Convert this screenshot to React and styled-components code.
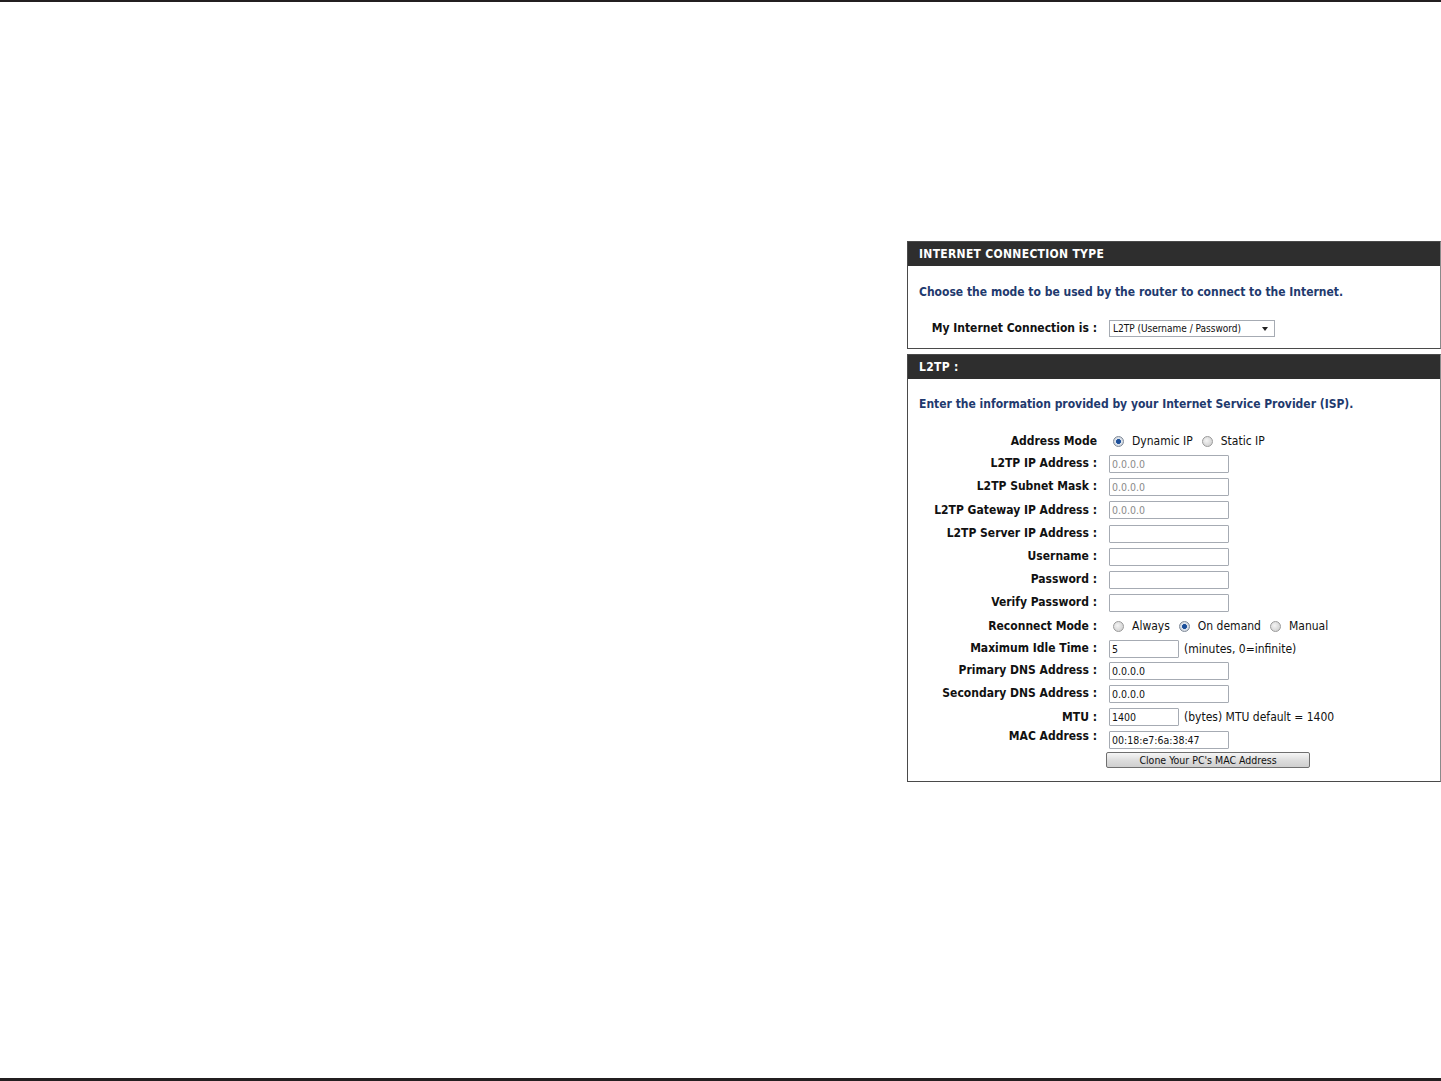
import React from "react";
import styled, { createGlobalStyle } from "styled-components";

const GlobalStyle = createGlobalStyle`
  html, body {
    margin: 0;
    padding: 0;
    background: #fff;
  }
  body {
    font-family: "DejaVu Sans Condensed", "DejaVu Sans", sans-serif;
  }
`;

const Page = styled.div`
  height: 1081px;
  box-sizing: border-box;
  border-top: 2px solid #231f20;
  border-bottom: 3px solid #231f20;
  display: flex;
  justify-content: flex-end;
`;

const Column = styled.div`
  width: 534px;
  margin-top: 239px;
  display: flex;
  flex-direction: column;
  gap: 5px;
`;

const Panel = styled.div`
  border: 1px solid #4a4a4a;
  border-right-color: #8a8a8a;
  background: #fff;
  padding-bottom: ${(p) => p.$pb || 0}px;
`;

const Header = styled.div`
  height: 24px;
  background: #2e2e2e;
  color: #fff;
  font-weight: bold;
  font-size: 12px;
  letter-spacing: 0.3px;
  display: flex;
  align-items: center;
  padding-left: 11px;
`;

const Intro = styled.div`
  color: #1f3a6e;
  font-weight: bold;
  font-size: 12px;
  padding: ${(p) => p.$pt || 18}px 11px 0;
  line-height: 15px;
`;

const Form = styled.div`
  display: grid;
  grid-template-columns: 189px 1fr;
  column-gap: 12px;
  margin-top: ${(p) => p.$mt || 0}px;
`;

const Label = styled.div`
  font-weight: bold;
  font-size: 12px;
  color: #111;
  text-align: right;
  display: flex;
  justify-content: flex-end;
  align-items: ${(p) => (p.$top ? "flex-start" : "center")};
  min-height: ${(p) => p.$h || 23}px;
  line-height: 15px;
  white-space: nowrap;
`;

const Field = styled.div`
  display: flex;
  align-items: center;
  gap: 5px;
  min-height: ${(p) => p.$h || 23}px;
  font-size: 12px;
  color: #111;
`;

const Stack = styled.div`
  display: flex;
  flex-direction: column;
  align-items: flex-start;
  gap: 3px;
  padding-top: 2px;
`;

const Input = styled.input`
  box-sizing: border-box;
  width: ${(p) => p.$w || 120}px;
  height: 18px;
  margin: 0;
  border: 1px solid #a6abb3;
  border-radius: 1px;
  padding: 0 2px;
  font-family: inherit;
  font-size: 10.5px;
  color: #111;
  background: #fff;
  outline: none;
  &:disabled {
    color: #8a8a8a;
    background: #fff;
  }
`;

const SelectWrap = styled.div`
  position: relative;
  width: 166px;
  height: 17px;
  box-sizing: border-box;
  border: 1px solid #a6abb3;
  &::after {
    content: "";
    position: absolute;
    right: 6px;
    top: 6px;
    border-left: 3px solid transparent;
    border-right: 3px solid transparent;
    border-top: 4px solid #222;
  }
`;

const Select = styled.select`
  appearance: none;
  display: block;
  border: none;
  margin: 0;
  background: transparent;
  width: 100%;
  height: 15px;
  line-height: 15px;
  padding: 0 0 0 3px;
  font-family: inherit;
  font-size: 10px;
  color: #111;
  outline: none;
`;

const RadioGroup = styled.label`
  display: inline-flex;
  align-items: center;
  gap: 8px;
  font-size: 12px;
`;

const Radio = styled.input.attrs({ type: "radio" })`
  appearance: none;
  margin: 0 0 0 4px;
  width: 11px;
  height: 11px;
  border-radius: 50%;
  border: 1px solid #9a9a9a;
  background: radial-gradient(circle at 40% 40%, #f4f4f4, #c8c8c8);
  box-sizing: border-box;
  &:checked {
    border-color: #7f8a99;
    background: radial-gradient(circle, #1c4f9a 0 2.2px, #dde6f2 2.6px, #c8c8c8);
  }
`;

const Note = styled.span`
  font-size: 12px;
  color: #111;
`;

const Button = styled.button`
  width: 204px;
  height: 16px;
  margin-left: -3px;
  padding: 0;
  border: 1px solid #6f6f6f;
  border-radius: 2px;
  background: linear-gradient(#f6f6f6, #dcdcdc 55%, #cfcfcf);
  font-family: inherit;
  font-size: 10.5px;
  color: #111;
  line-height: 14px;
`;

const rows = [
  { label: "L2TP IP Address :", value: "0.0.0.0", disabled: true, h: 23 },
  { label: "L2TP Subnet Mask :", value: "0.0.0.0", disabled: true, h: 23 },
  { label: "L2TP Gateway IP Address :", value: "0.0.0.0", disabled: true, h: 24 },
  { label: "L2TP Server IP Address :", value: "", h: 23 },
  { label: "Username :", value: "", h: 23 },
  { label: "Password :", value: "", type: "password", h: 23 },
  { label: "Verify Password :", value: "", type: "password", h: 23 },
];

export default function App() {
  return (
    <>
      <GlobalStyle />
      <Page>
        <Column>
          <Panel $pb={9}>
            <Header>INTERNET CONNECTION TYPE</Header>
            <Intro $pt={19}>Choose the mode to be used by the router to connect to the Internet.</Intro>
            <Form $mt={17}>
              <Label $h={22}>My Internet Connection is :</Label>
              <Field $h={22}>
                <SelectWrap>
                  <Select defaultValue="l2tp">
                    <option value="l2tp">L2TP (Username / Password)</option>
                  </Select>
                </SelectWrap>
              </Field>
            </Form>
          </Panel>

          <Panel $pb={13}>
            <Header>L2TP :</Header>
            <Intro $pt={18}>Enter the information provided by your Internet Service Provider (ISP).</Intro>
            <Form $mt={18}>
              <Label $h={22}>Address Mode</Label>
              <Field $h={22}>
                <RadioGroup>
                  <Radio name="mode" defaultChecked /> Dynamic IP
                </RadioGroup>
                <RadioGroup>
                  <Radio name="mode" /> Static IP
                </RadioGroup>
              </Field>

              {rows.map((r) => (
                <React.Fragment key={r.label}>
                  <Label $h={r.h}>{r.label}</Label>
                  <Field $h={r.h}>
                    <Input
                      type={r.type || "text"}
                      defaultValue={r.value}
                      disabled={r.disabled}
                    />
                  </Field>
                </React.Fragment>
              ))}

              <Label $h={24}>Reconnect Mode :</Label>
              <Field $h={24}>
                <RadioGroup>
                  <Radio name="rc" /> Always
                </RadioGroup>
                <RadioGroup>
                  <Radio name="rc" defaultChecked /> On demand
                </RadioGroup>
                <RadioGroup>
                  <Radio name="rc" /> Manual
                </RadioGroup>
              </Field>

              <Label $h={21}>Maximum Idle Time :</Label>
              <Field $h={21}>
                <Input $w={70} defaultValue="5" />
                <Note>(minutes, 0=infinite)</Note>
              </Field>

              <Label>Primary DNS Address :</Label>
              <Field>
                <Input defaultValue="0.0.0.0" />
              </Field>

              <Label>Secondary DNS Address :</Label>
              <Field>
                <Input defaultValue="0.0.0.0" />
              </Field>

              <Label $h={24}>MTU :</Label>
              <Field $h={24}>
                <Input $w={70} defaultValue="1400" />
                <Note>(bytes) MTU default = 1400</Note>
              </Field>

              <Label $top $h={15}>MAC Address :</Label>
              <Stack>
                <Input defaultValue="00:18:e7:6a:38:47" />
                <Button type="button">Clone Your PC's MAC Address</Button>
              </Stack>
            </Form>
          </Panel>
        </Column>
      </Page>
    </>
  );
}
